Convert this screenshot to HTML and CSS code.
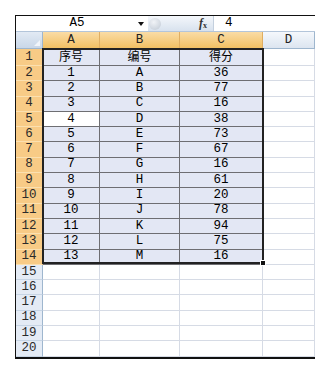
FILE: index.html
```html
<!DOCTYPE html>
<html lang="zh-CN">
<head>
<meta charset="UTF-8">
<title>Sheet1</title>
<link rel="stylesheet" href="styles.css">
</head>
<body>
<div class="sheet">
	<div class="formula-bar">
		<div class="name-box"><span class="ref">A5</span><span class="drop"></span></div>
		<div class="fx-area"><span class="cancel"></span><span class="fx"><i>f</i><sub>x</sub></span></div>
		<div class="formula">4</div>
	</div>
	<div class="cells">
		<table class="grid">
			<colgroup><col class="c-rh"><col class="c-a"><col class="c-b"><col class="c-c"><col class="c-d"></colgroup>
			<tr class="head">
				<th class="corner"><span class="tri"></span></th>
				<th class="ch sel">A</th><th class="ch sel">B</th><th class="ch sel">C</th><th class="ch">D</th>
			</tr>
			<tr><th class="rh sel">1</th><td class="d"><span class="cn">序号</span></td><td class="d"><span class="cn">编号</span></td><td class="d"><span class="cn">得分</span></td><td></td></tr>
			<tr><th class="rh sel">2</th><td class="d">1</td><td class="d">A</td><td class="d">36</td><td></td></tr>
			<tr><th class="rh sel">3</th><td class="d">2</td><td class="d">B</td><td class="d">77</td><td></td></tr>
			<tr><th class="rh sel">4</th><td class="d">3</td><td class="d">C</td><td class="d">16</td><td></td></tr>
			<tr><th class="rh sel">5</th><td class="d act">4</td><td class="d">D</td><td class="d">38</td><td></td></tr>
			<tr><th class="rh sel">6</th><td class="d">5</td><td class="d">E</td><td class="d">73</td><td></td></tr>
			<tr><th class="rh sel">7</th><td class="d">6</td><td class="d">F</td><td class="d">67</td><td></td></tr>
			<tr><th class="rh sel">8</th><td class="d">7</td><td class="d">G</td><td class="d">16</td><td></td></tr>
			<tr><th class="rh sel">9</th><td class="d">8</td><td class="d">H</td><td class="d">61</td><td></td></tr>
			<tr><th class="rh sel">10</th><td class="d">9</td><td class="d">I</td><td class="d">20</td><td></td></tr>
			<tr><th class="rh sel">11</th><td class="d">10</td><td class="d">J</td><td class="d">78</td><td></td></tr>
			<tr><th class="rh sel">12</th><td class="d">11</td><td class="d">K</td><td class="d">94</td><td></td></tr>
			<tr><th class="rh sel">13</th><td class="d">12</td><td class="d">L</td><td class="d">75</td><td></td></tr>
			<tr><th class="rh sel">14</th><td class="d">13</td><td class="d">M</td><td class="d">16</td><td></td></tr>
			<tr><th class="rh">15</th><td></td><td></td><td></td><td></td></tr>
			<tr><th class="rh">16</th><td></td><td></td><td></td><td></td></tr>
			<tr><th class="rh">17</th><td></td><td></td><td></td><td></td></tr>
			<tr><th class="rh">18</th><td></td><td></td><td></td><td></td></tr>
			<tr><th class="rh">19</th><td></td><td></td><td></td><td></td></tr>
			<tr><th class="rh">20</th><td></td><td></td><td></td><td></td></tr>
		</table>
		<div class="selection"><span class="handle"></span></div>
	</div>
</div>
</body>
</html>
```

FILE: styles.css
```css
html,body{margin:0;background:#fff;}
body{
	font-family:"Liberation Mono","Noto Sans CJK SC",monospace;
	font-size:12.5px;
	color:#000;
}
.sheet{
	margin:15px 0 0 15px;
	border-top:1px solid #111;
	border-left:1px solid #111;
	border-bottom:2px solid #111;
	overflow:hidden;
}

/* formula bar */
.formula-bar{
	display:flex;
	height:15px;
	border-bottom:1px solid #b3c5da;
	background:#fff;
}
.name-box{width:132px;display:flex;align-items:center;}
.ref{flex:1;text-align:center;line-height:15px;}
.drop{
	width:0;height:0;
	margin-right:4px;
	border-left:3px solid transparent;
	border-right:3px solid transparent;
	border-top:4px solid #111;
}
.fx-area{
	width:65px;
	display:flex;
	align-items:center;
	justify-content:space-between;
	background:linear-gradient(#f4f7fb,#d8e2ee);
	overflow:hidden;
}
.cancel{
	width:12px;height:12px;
	margin-left:1px;
	border-radius:50%;
	background:radial-gradient(circle at 40% 35%,#f2f4f7,#c9d0d9 70%,#e2e7ee);
	opacity:.8;
}
.fx{
	margin-right:6px;
	font-family:"Liberation Serif",serif;
	font-size:12px;
	font-weight:bold;
	color:#333;
}
.fx sub{font-size:8px;vertical-align:-1px;}
.formula{flex:1;padding-left:11px;line-height:15px;border-left:1px solid #c4d0de;}

/* grid */
.cells{position:relative;}
.grid{
	table-layout:fixed;
	border-collapse:separate;
	border-spacing:0;
	width:299px;
}
.c-rh{width:27px;}
.c-a{width:57px;}
.c-b{width:80px;}
.c-c{width:83px;}
.c-d{width:52px;}
.grid tr{height:15.3px;}
.grid tr.head{height:17px;}
.grid th,.grid td{
	padding:0;
	line-height:13px;
	text-align:center;
	font-weight:normal;
	white-space:nowrap;
}
.grid td{
	border-right:1px solid #d6dbe5;
	border-bottom:1px solid #d6dbe5;
}
.grid td.d{
	background:#e3e7f4;
	border-right-color:#6e6e72;
	border-bottom-color:#6e6e72;
}
.grid td.act{background:#fff;}
.cn{font-family:"Noto Sans CJK SC",sans-serif;font-size:12px;line-height:13px;}

.corner{
	background:linear-gradient(#e2eaf4,#c9d7e8);
	border-right:1px solid #9eb6ce;
	border-bottom:1px solid #9eb6ce;
	text-align:right !important;
	vertical-align:bottom;
}
.tri{
	display:inline-block;
	width:0;height:0;
	margin:0 2px 2px 0;
	border-left:6px solid transparent;
	border-bottom:6px solid #f1f5fa;
	vertical-align:bottom;
}
.ch{
	color:#222;
	background:linear-gradient(#f5f8fc,#dce5f0);
	border-right:1px solid #9eb6ce;
	border-bottom:1px solid #9eb6ce;
}
.ch.sel{
	background:linear-gradient(#fadca6,#f2c063);
	border-right-color:#e0ae62;
	border-bottom-color:#e8a54a;
}
.rh{
	color:#2a2a2a;
	background:#e4ebf5;
	border-right:1px solid #9eb6ce;
	border-bottom:1px solid #c6d4e4;
}
.rh.sel{
	background:#f8cb86;
	border-right-color:#e2a85a;
	border-bottom-color:#fbe0b0;
}

/* selected range A1:C14 */
.selection{
	position:absolute;
	left:26px;
	top:16px;
	width:222px;
	height:216px;
	box-sizing:border-box;
	border:2px solid #222;
}
.handle{
	position:absolute;
	right:-4px;
	bottom:-4px;
	width:4px;height:4px;
	background:#111;
	border:1px solid #fff;
}
```
